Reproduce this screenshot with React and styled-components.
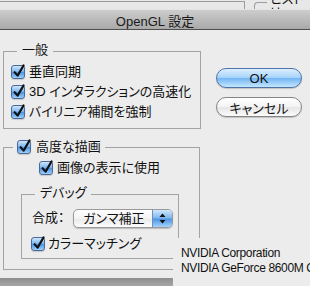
import React from "react";
import styled, { createGlobalStyle } from "styled-components";

const GlobalStyle = createGlobalStyle`
  html, body {
    margin: 0;
    padding: 0;
    background: #ececec;
  }
  body {
    font-family: "Liberation Sans", "Noto Sans CJK JP", sans-serif;
    font-feature-settings: "palt";
    font-size: 13px;
    color: #111;
  }
`;

const Screen = styled.div`
  position: relative;
  width: 310px;
  height: 286px;
  overflow: hidden;
  display: flex;
  flex-direction: column;
  background: #ececec;
`;

const BehindStrip = styled.div`
  height: 9px;
  flex: none;
  display: flex;
  overflow: hidden;
  background: #e8e8e8;
`;

const BehindEdge = styled.div`
  width: 245px;
  height: 8px;
  margin-top: 1px;
  border-top: 1px solid #9c9c9c;
  border-right: 1px solid #9c9c9c;
  box-sizing: border-box;
`;

const BehindGroup = styled.div`
  flex: 1;
  height: 7px;
  margin: 2px 0 0 9px;
  border-top: 1px solid #9c9c9c;
  border-left: 1px solid #9c9c9c;
  border-top-left-radius: 4px;
`;

const BehindTitle = styled.span`
  display: inline-block;
  margin: -11px 0 0 12px;
  padding: 0 3px;
  background: #e8e8e8;
  line-height: 14px;
  font-size: 13px;
`;

const TitleBar = styled.div`
  height: 21px;
  flex: none;
  box-sizing: border-box;
  border-top: 1px solid #e4e4e4;
  border-bottom: 1px solid #4f4f4f;
  background: linear-gradient(#cdcdcd, #a9a9a9);
  display: flex;
  align-items: center;
  justify-content: center;
  font-size: 13px;
  color: #1a1a1a;
  padding-top: 1px;
`;

const Body = styled.div`
  flex: 1;
  display: flex;
  padding: 21px 0 0 3px;
`;

const LeftColumn = styled.div`
  width: 198px;
  flex: none;
  display: flex;
  flex-direction: column;
`;

const RightColumn = styled.div`
  margin-left: 15px;
  padding-top: 17px;
  display: flex;
  flex-direction: column;
  gap: 9px;
`;

const Group = styled.div`
  box-sizing: border-box;
  width: ${(p) => p.$width}px;
  margin-top: ${(p) => p.$top || 0}px;
  margin-left: ${(p) => p.$left || 0}px;
  border: 1px solid #a3a3a3;
  padding-bottom: ${(p) => p.$bottom}px;
  display: flex;
  flex-direction: column;
`;

const GroupTitle = styled.div`
  align-self: flex-start;
  display: flex;
  align-items: center;
  gap: 5px;
  height: 16px;
  line-height: 16px;
  margin: ${(p) => p.$top}px 0 0 ${(p) => p.$left}px;
  padding: 0 ${(p) => p.$pad}px;
  background: #ececec;
`;

const Row = styled.div`
  display: flex;
  align-items: center;
  height: 20px;
  line-height: 16px;
  gap: ${(p) => p.$gap || 4}px;
  margin-top: ${(p) => p.$top || 0}px;
  margin-left: ${(p) => p.$left}px;
  white-space: nowrap;
`;

const Box = styled.span`
  position: relative;
  flex: none;
  width: 14px;
  height: 14px;
  box-sizing: border-box;
  border: 1px solid #48699a;
  border-radius: 3px;
  background: linear-gradient(#cfe6fd, #79b3ee 48%, #4a93e3 52%, #9fd0fa);
  box-shadow: 0 1px 1px rgba(0, 0, 0, 0.15);

  svg {
    position: absolute;
    left: 0;
    top: -3px;
    overflow: visible;
  }
`;

const Button = styled.div`
  width: 86px;
  height: 20px;
  box-sizing: border-box;
  border-radius: 10px;
  display: flex;
  align-items: center;
  justify-content: center;
  font-size: 13px;
  color: #111;
  border: 1px solid ${(p) => (p.$primary ? "#4f73a6" : "#858585")};
  background: ${(p) =>
    p.$primary
      ? "linear-gradient(#dcefff, #a6d3fa 48%, #72b6f3 52%, #c4e6ff)"
      : "linear-gradient(#ffffff, #f4f4f4 48%, #e6e6e6 52%, #fbfbfb)"};
  box-shadow: 0 1px 1px rgba(0, 0, 0, 0.18);
`;

const LabelText = styled.span`
  width: 37px;
  flex: none;
`;

const Popup = styled.div`
  width: 100px;
  height: 19px;
  box-sizing: border-box;
  display: flex;
  border: 1px solid #9a9a9a;
  border-radius: 5px;
  overflow: hidden;
  background: linear-gradient(#ffffff, #f3f3f3 50%, #e9e9e9 52%, #fcfcfc);
  box-shadow: 0 1px 1px rgba(0, 0, 0, 0.2);
`;

const PopupValue = styled.span`
  flex: 1;
  padding-left: 9px;
  line-height: 17px;
`;

const PopupCap = styled.span`
  width: 19px;
  flex: none;
  display: flex;
  align-items: center;
  justify-content: center;
  border-left: 1px solid #6b8fc2;
  background: linear-gradient(#cfe6fd, #7db6ef 48%, #4b93e2 52%, #a3d3fb);
`;

const BottomShade = styled.div`
  height: 8px;
  flex: none;
  background: linear-gradient(#8e8e8e, #a6a6a6);
`;

const InfoPanel = styled.div`
  position: absolute;
  left: 173px;
  top: 238px;
  right: 0;
  bottom: 0;
  background: #ececec;
  padding: 8px 0 0 8px;
  font-family: "Liberation Sans", sans-serif;
  font-size: 12px;
  letter-spacing: -0.35px;
  line-height: 15px;
  color: #111;
  white-space: nowrap;
`;

function Check() {
  return (
    <Box>
      <svg width="14" height="16" viewBox="0 0 14 16">
        <path
          d="M2.6 9.2 L5.6 12.6 L11.6 2.4"
          stroke="#111"
          strokeWidth="2.1"
          fill="none"
          strokeLinecap="round"
          strokeLinejoin="round"
        />
      </svg>
    </Box>
  );
}

function Arrows() {
  return (
    <svg width="7" height="11" viewBox="0 0 7 11">
      <path d="M3.5 0.5 L6.5 4 L0.5 4 Z" fill="#111" />
      <path d="M3.5 10.5 L6.5 7 L0.5 7 Z" fill="#111" />
    </svg>
  );
}

export default function App() {
  return (
    <>
      <GlobalStyle />
      <Screen>
        <BehindStrip>
          <BehindEdge />
          <BehindGroup>
            <BehindTitle>ヒストリー</BehindTitle>
          </BehindGroup>
        </BehindStrip>
        <TitleBar>OpenGL 設定</TitleBar>
        <Body>
          <LeftColumn>
            <Group $width={198} $bottom={6}>
              <GroupTitle $top={-10} $left={13} $pad={5}>
                一般
              </GroupTitle>
              <Row $top={4} $left={7}>
                <Check />
                垂直同期
              </Row>
              <Row $left={7}>
                <Check />
                3D インタラクションの高速化
              </Row>
              <Row $left={7}>
                <Check />
                バイリニア補間を強制
              </Row>
            </Group>
            <Group $width={197} $top={18} $bottom={10}>
              <GroupTitle $top={-9} $left={9} $pad={4}>
                <Check />
                高度な描画
              </GroupTitle>
              <Row $top={3} $left={35}>
                <Check />
                画像の表示に使用
              </Row>
              <Group $width={158} $top={16} $left={17} $bottom={4}>
                <GroupTitle $top={-10} $left={13} $pad={5}>
                  デバッグ
                </GroupTitle>
                <Row $top={7} $left={10} $gap={0}>
                  <LabelText>合成：</LabelText>
                  <Popup>
                    <PopupValue>ガンマ補正</PopupValue>
                    <PopupCap>
                      <Arrows />
                    </PopupCap>
                  </Popup>
                </Row>
                <Row $top={6} $left={9} $gap={3}>
                  <Check />
                  カラーマッチング
                </Row>
              </Group>
            </Group>
          </LeftColumn>
          <RightColumn>
            <Button $primary>OK</Button>
            <Button>キャンセル</Button>
          </RightColumn>
        </Body>
        <BottomShade />
        <InfoPanel>
          <div>NVIDIA Corporation</div>
          <div>NVIDIA GeForce 8600M GT</div>
        </InfoPanel>
      </Screen>
    </>
  );
}
